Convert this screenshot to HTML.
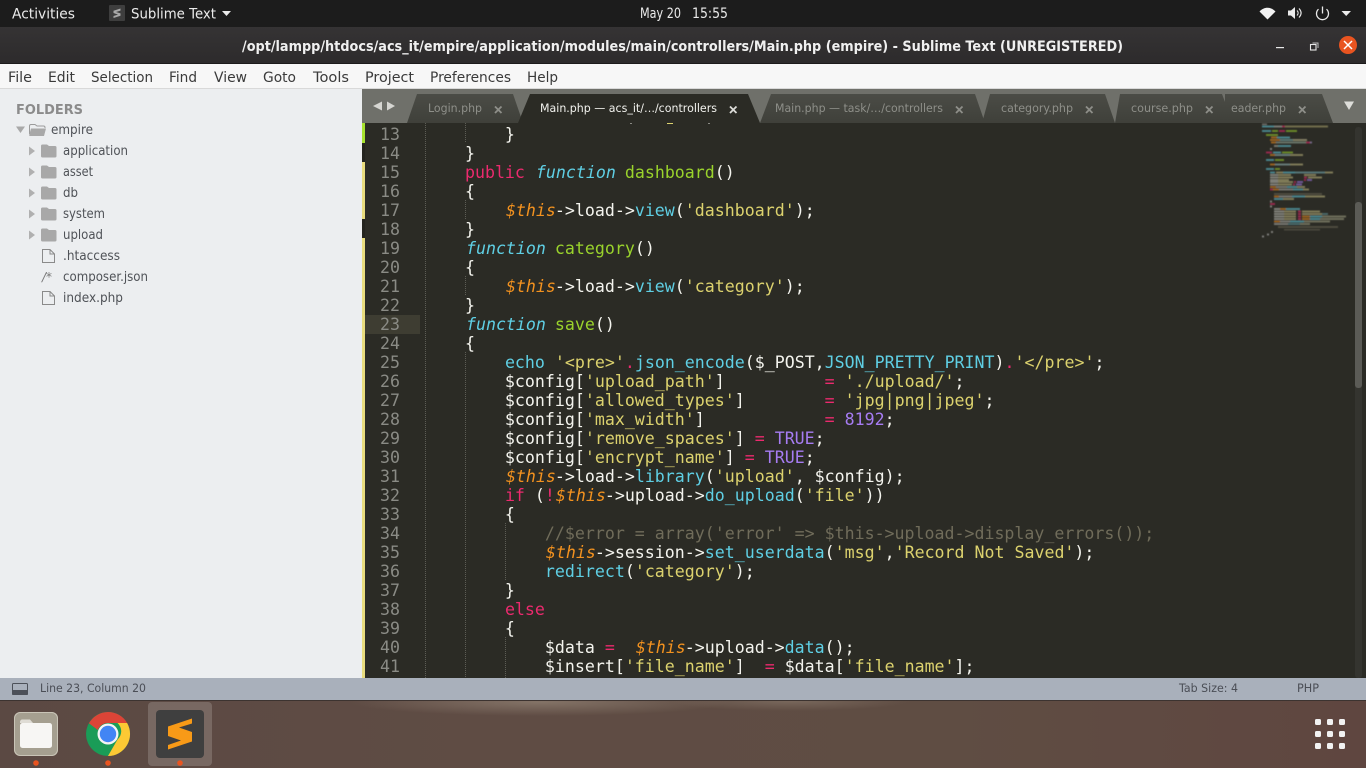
<!DOCTYPE html>
<html>
<head>
<meta charset="utf-8">
<title>Sublime Text</title>
<style>
html,body{margin:0;padding:0;width:1366px;height:768px;overflow:hidden;background:#2b2b25}
svg{position:absolute;left:0;top:0}
#code{position:absolute;left:365px;top:123px;width:990px;height:555px;overflow:hidden;background:#2b2b25}
.l{position:absolute;left:60px;height:19px;line-height:19px;white-space:pre;font-family:"DejaVu Sans Mono",monospace;font-size:16.6px;color:#f4f4ee}
.n{position:absolute;left:0;width:35px;text-align:right;height:19px;line-height:19px;font-family:"DejaVu Sans Mono",monospace;font-size:16.6px;color:#8a8b85}
.k{color:#ec2a6e}.f{color:#5fcfe4;font-style:italic;position:relative;left:1px}.c{color:#5fcfe4}.g{color:#9ad32c}.s{color:#dcd26e}.v{color:#f3921f;font-style:italic;position:relative;left:1px}.p{color:#a67cf2}.m{color:#706c5a}
.t{font-family:"DejaVu Sans",sans-serif}
</style>
</head>
<body>
<svg width="1366" height="768" viewBox="0 0 1366 768" xmlns="http://www.w3.org/2000/svg">
<defs>
<linearGradient id="tb" x1="0" y1="0" x2="0" y2="1"><stop offset="0" stop-color="#353334"/><stop offset="1" stop-color="#2d2b2c"/></linearGradient>
<linearGradient id="dock" x1="0" y1="0" x2="1" y2="0"><stop offset="0" stop-color="#5b4943"/><stop offset=".35" stop-color="#5f4c44"/><stop offset=".7" stop-color="#5f4d43"/><stop offset="1" stop-color="#5f4640"/></linearGradient>
<radialGradient id="sm1"><stop offset="0" stop-color="#a89a8a" stop-opacity=".5"/><stop offset="1" stop-color="#a89a8a" stop-opacity="0"/></radialGradient>
<linearGradient id="tabi" x1="0" y1="0" x2="0" y2="1"><stop offset="0" stop-color="#4b4c46"/><stop offset="1" stop-color="#3f403a"/></linearGradient>
<filter id="bl"><feGaussianBlur stdDeviation=".6"/></filter>
</defs>
<!-- top bar -->
<rect x="0" y="0" width="1366" height="27" fill="#1c1c1c"/>
<g class="t" fill="#ebebeb" font-size="14">
<text x="12" y="18.5" textLength="63" lengthAdjust="spacingAndGlyphs">Activities</text>
<text x="131" y="18.5" textLength="85" lengthAdjust="spacingAndGlyphs">Sublime Text</text>
<text x="640" y="18" textLength="41" lengthAdjust="spacingAndGlyphs">May 20</text>
<text x="692" y="18" textLength="36" lengthAdjust="spacingAndGlyphs">15:55</text>
</g>
<rect x="109" y="5" width="16" height="16" rx="1" fill="#3e3e3e"/>
<path d="M120.5 8.5L113.5 10.8V13L118 14.6L113.5 16V18L120.5 15.7V13.4L116 12L120.5 10.6Z" fill="#a9a9a9"/>
<path d="M222 11H231L226.5 16Z" fill="#ebebeb"/>
<path d="M1259.5 11.5C1264 6.5 1271 6.5 1275.5 11.5L1267.5 19.5Z" fill="#f2f2f2"/>
<path d="M1288 10.5H1291L1295 7V19L1291 15.5H1288Z" fill="#ebebeb"/>
<path d="M1297 10.5C1298.5 12 1298.5 14 1297 15.5M1299 8.5C1301.8 11.5 1301.8 14.5 1299 17.5" fill="none" stroke="#ebebeb" stroke-width="1.1"/>
<path d="M1318.5 9.2A6 6 0 1 0 1326.5 9.2" fill="none" stroke="#ebebeb" stroke-width="1.3"/>
<path d="M1322.5 6.5V13.5" stroke="#ebebeb" stroke-width="1.3"/>
<path d="M1341.5 11H1351L1346.2 16Z" fill="#ebebeb"/>
<!-- title bar -->
<rect x="0" y="27" width="1366" height="36" fill="url(#tb)"/>
<rect x="0" y="63" width="1366" height="1" fill="#1c1b1b"/>
<text class="t" x="242" y="51" font-size="14" font-weight="700" fill="#f0f0f0" textLength="881" lengthAdjust="spacingAndGlyphs">/opt/lampp/htdocs/acs_it/empire/application/modules/main/controllers/Main.php (empire) - Sublime Text (UNREGISTERED)</text>
<rect x="1276" y="47" width="8" height="1.2" fill="#e8e8e8"/>
<rect x="1310.5" y="44.5" width="5.5" height="5.5" fill="none" stroke="#e8e8e8" stroke-width="1.1"/>
<path d="M1312.5 43H1318V48" fill="none" stroke="#bbb" stroke-width="1"/>
<circle cx="1348" cy="45" r="9" fill="#e95420"/>
<path d="M1344 41L1352 49M1352 41L1344 49" stroke="#fff" stroke-width="1.5"/>
<!-- menu -->
<rect x="0" y="64" width="1366" height="24" fill="#f7f7f7"/>
<rect x="0" y="88" width="1366" height="1" fill="#d9d9d9"/>
<g class="t" fill="#3a3a3a" font-size="14">
<text x="8" y="82" textLength="24" lengthAdjust="spacingAndGlyphs">File</text>
<text x="48" y="82" textLength="27" lengthAdjust="spacingAndGlyphs">Edit</text>
<text x="91" y="82" textLength="62" lengthAdjust="spacingAndGlyphs">Selection</text>
<text x="169" y="82" textLength="28" lengthAdjust="spacingAndGlyphs">Find</text>
<text x="214" y="82" textLength="33" lengthAdjust="spacingAndGlyphs">View</text>
<text x="263" y="82" textLength="33" lengthAdjust="spacingAndGlyphs">Goto</text>
<text x="313" y="82" textLength="36" lengthAdjust="spacingAndGlyphs">Tools</text>
<text x="365" y="82" textLength="49" lengthAdjust="spacingAndGlyphs">Project</text>
<text x="430" y="82" textLength="81" lengthAdjust="spacingAndGlyphs">Preferences</text>
<text x="527" y="82" textLength="31" lengthAdjust="spacingAndGlyphs">Help</text>
</g>
<!-- sidebar -->
<rect x="0" y="89" width="362" height="589" fill="#eceef0"/>
<text class="t" x="16" y="114" font-size="13" font-weight="700" fill="#8b8b8b" textLength="67" lengthAdjust="spacingAndGlyphs">FOLDERS</text>
<g class="t" fill="#4f5257" font-size="13">
<text x="51" y="134" textLength="42" lengthAdjust="spacingAndGlyphs">empire</text>
<text x="63" y="155" textLength="65" lengthAdjust="spacingAndGlyphs">application</text>
<text x="63" y="176" textLength="30" lengthAdjust="spacingAndGlyphs">asset</text>
<text x="63" y="197" textLength="15" lengthAdjust="spacingAndGlyphs">db</text>
<text x="63" y="218" textLength="42" lengthAdjust="spacingAndGlyphs">system</text>
<text x="63" y="239" textLength="40" lengthAdjust="spacingAndGlyphs">upload</text>
<text x="63" y="260" textLength="57" lengthAdjust="spacingAndGlyphs">.htaccess</text>
<text x="63" y="281" textLength="85" lengthAdjust="spacingAndGlyphs">composer.json</text>
<text x="63" y="302" textLength="60" lengthAdjust="spacingAndGlyphs">index.php</text>
</g>
<path d="M16 126.500H25L20.500 133Z" fill="#a8a8a8"/>
<path d="M29.500 134V126C29.500 125 30 124.500 31 124.500H35L37 126H43.500C44.500 126 45 126.500 45 127.500V128" fill="none" stroke="#9b9b9b" stroke-width="1"/>
<path d="M29 135.500L31 128.500H46L44 136H30Z" fill="#a8a8a8"/>
<g fill="#b0b0b0">
<path d="M29 146.500L35 151L29 155.500Z"/><path d="M29 167.500L35 172L29 176.500Z"/><path d="M29 188.500L35 193L29 197.500Z"/><path d="M29 209.500L35 214L29 218.500Z"/><path d="M29 230.500L35 235L29 239.500Z"/>
</g>
<g fill="#a8a8a8">
<path d="M41 146C41 145 41.500 144.500 42.500 144.500H47L49 146H55C56 146 56.500 146.500 56.500 147.500V156C56.500 157 56 157.500 55 157.500H42.500C41.500 157.500 41 157 41 156Z"/>
<path d="M41 167C41 166 41.500 165.500 42.500 165.500H47L49 167H55C56 167 56.500 167.500 56.500 168.500V177C56.500 178 56 178.500 55 178.500H42.500C41.500 178.500 41 178 41 177Z"/>
<path d="M41 188C41 187 41.500 186.500 42.500 186.500H47L49 188H55C56 188 56.500 188.500 56.500 189.500V198C56.500 199 56 199.500 55 199.500H42.500C41.500 199.500 41 199 41 198Z"/>
<path d="M41 209C41 208 41.500 207.500 42.500 207.500H47L49 209H55C56 209 56.500 209.500 56.500 210.500V219C56.500 220 56 220.500 55 220.500H42.500C41.500 220.500 41 220 41 219Z"/>
<path d="M41 230C41 229 41.500 228.500 42.500 228.500H47L49 230H55C56 230 56.500 230.500 56.500 231.500V240C56.500 241 56 241.500 55 241.500H42.500C41.500 241.500 41 241 41 240Z"/>
</g>
<g fill="none" stroke="#8a8a8a" stroke-width="1">
<path d="M42.500 249.500H50L54.500 254V262.500H42.500Z"/><path d="M50 249.500V254H54.500"/>
<path d="M42.500 291.500H50L54.500 296V304.500H42.500Z"/><path d="M50 291.500V296H54.500"/>
</g>
<text class="t" x="42" y="281" font-size="12" fill="#777" font-style="italic">/*</text>
<!-- tab bar -->
<rect x="362" y="89" width="1004" height="34" fill="#6f706a"/>
<path d="M373 106L382 101.500V110.500Z" fill="#d6d6d2"/><path d="M387 101.500L395 106L387 110.500Z" fill="#d6d6d2"/>
<path d="M1225 123L1225 94H1322L1333 123Z" fill="url(#tabi)"/>
<path d="M1115 123L1120 94H1222L1233 123Z" fill="url(#tabi)"/>
<path d="M982 123L990 94H1105L1115 123Z" fill="url(#tabi)"/>
<path d="M760 123L771 94H975L985 123Z" fill="url(#tabi)"/>
<path d="M407 123L417 94H513L523 123Z" fill="url(#tabi)"/>
<path d="M518 123L530 94H748L760 123Z" fill="#2b2b25"/>
<g class="t" font-size="11.700" fill="#8e8f89">
<text x="428" y="112" textLength="54" lengthAdjust="spacingAndGlyphs">Login.php</text>
<text x="775" y="112" textLength="168" lengthAdjust="spacingAndGlyphs">Main.php — task/…/controllers</text>
<text x="1001" y="112" textLength="72" lengthAdjust="spacingAndGlyphs">category.php</text>
<text x="1131" y="112" textLength="62" lengthAdjust="spacingAndGlyphs">course.php</text>
<text x="1231" y="112" textLength="55" lengthAdjust="spacingAndGlyphs">eader.php</text>
</g>
<text class="t" x="540" y="112" font-size="11.700" fill="#f2f2ee" textLength="177" lengthAdjust="spacingAndGlyphs">Main.php — acs_it/…/controllers</text>
<g stroke="#8e8f89" stroke-width="1.800">
<path d="M495 106.500L501.500 113M501.500 106.500L495 113"/>
<path d="M956 106.500L962.500 113M962.500 106.500L956 113"/>
<path d="M1086 106.500L1092.500 113M1092.500 106.500L1086 113"/>
<path d="M1206 106.500L1212.500 113M1212.500 106.500L1206 113"/>
<path d="M1299 106.500L1305.500 113M1305.500 106.500L1299 113"/>
</g>
<path d="M730 106.500L736.500 113M736.500 106.500L730 113" stroke="#dcdcd8" stroke-width="1.800"/>
<path d="M1344 101.500H1354L1349 110Z" fill="#dededa"/>
<!-- dock -->
<rect x="0" y="701" width="1366" height="67" fill="url(#dock)"/>
<ellipse cx="540" cy="702" rx="190" ry="14" fill="url(#sm1)"/>
<ellipse cx="790" cy="701" rx="120" ry="10" fill="url(#sm1)" opacity=".7"/>
<!-- status -->
<rect x="0" y="678" width="1366" height="22" fill="#a9b0bb"/>
<rect x="0" y="700" width="1366" height="1" fill="#3c3330"/>
<rect x="12.500" y="683.500" width="15" height="11" rx="1" fill="none" stroke="#4c5058" stroke-width="1"/>
<rect x="12" y="690" width="16" height="5" rx="1" fill="#4c5058"/>
<g class="t" font-size="11.500" fill="#4b4e56">
<text x="40" y="692" textLength="106" lengthAdjust="spacingAndGlyphs">Line 23, Column 20</text>
<text x="1179" y="692" textLength="59" lengthAdjust="spacingAndGlyphs">Tab Size: 4</text>
<text x="1297" y="692" textLength="22" lengthAdjust="spacingAndGlyphs">PHP</text>
</g>
<rect x="14" y="712" width="44" height="44" rx="6" fill="#a59f90"/>
<rect x="14.500" y="712.500" width="43" height="43" rx="6" fill="none" stroke="#c9c4b7" stroke-width="1"/>
<path d="M20 722C20 720.500 21 719.500 22.500 719.500H30L33 723H20Z" fill="#dfdcd5"/>
<rect x="20" y="723" width="32" height="25" rx="2.500" fill="#f7f6f4"/>
<circle cx="108" cy="734" r="22" fill="#1a9c57"/>
<path d="M108 712A22 22 0 0 1 127.100 723H108A11 11 0 0 0 97.800 730L88.900 723.300A22 22 0 0 1 108 712Z" fill="#dc4437"/>
<path d="M127.100 723A22 22 0 0 1 108 756L117.500 739.500A11 11 0 0 0 117.500 723Z" fill="#fcc934"/>
<circle cx="108" cy="734" r="10.500" fill="#f4f4f4"/>
<circle cx="108" cy="734" r="8.200" fill="#4285f4"/>
<rect x="148" y="702" width="64" height="64" rx="4" fill="#ffffff" opacity=".17"/>
<rect x="156" y="710" width="48" height="48" rx="4" fill="#3f3f3f"/>
<path d="M192 718.500L168 726.500V736L181 740.500L168 745V749.500L192 741.500V732L179 727.500L192 723.500Z" fill="#f89a17"/>
<circle cx="36" cy="763" r="2.800" fill="#e95420"/><circle cx="108" cy="763" r="2.800" fill="#e95420"/><circle cx="180" cy="763" r="2.800" fill="#e95420"/>
<g fill="#f2f2f2">
<rect x="1315" y="719" width="6" height="6" rx="1.500"/><rect x="1327" y="719" width="6" height="6" rx="1.500"/><rect x="1339" y="719" width="6" height="6" rx="1.500"/>
<rect x="1315" y="731" width="6" height="6" rx="1.500"/><rect x="1327" y="731" width="6" height="6" rx="1.500"/><rect x="1339" y="731" width="6" height="6" rx="1.500"/>
<rect x="1315" y="743" width="6" height="6" rx="1.500"/><rect x="1327" y="743" width="6" height="6" rx="1.500"/><rect x="1339" y="743" width="6" height="6" rx="1.500"/>
</g>
</svg>

<div id="code">
<div style="position:absolute;left:0;top:192px;width:55px;height:19px;background:#3e3d32"></div>
<div class="n" style="top:2px">13</div><div class="n" style="top:21px">14</div><div class="n" style="top:40px">15</div><div class="n" style="top:59px">16</div><div class="n" style="top:78px">17</div><div class="n" style="top:97px">18</div><div class="n" style="top:116px">19</div><div class="n" style="top:135px">20</div><div class="n" style="top:154px">21</div><div class="n" style="top:173px">22</div><div class="n" style="top:192px">23</div><div class="n" style="top:211px">24</div><div class="n" style="top:230px">25</div><div class="n" style="top:249px">26</div><div class="n" style="top:268px">27</div><div class="n" style="top:287px">28</div><div class="n" style="top:306px">29</div><div class="n" style="top:325px">30</div><div class="n" style="top:344px">31</div><div class="n" style="top:363px">32</div><div class="n" style="top:382px">33</div><div class="n" style="top:401px">34</div><div class="n" style="top:420px">35</div><div class="n" style="top:439px">36</div><div class="n" style="top:458px">37</div><div class="n" style="top:477px">38</div><div class="n" style="top:496px">39</div><div class="n" style="top:515px">40</div><div class="n" style="top:534px">41</div>
<div class="l" style="top:2px">        }</div>
<div class="l" style="top:21px">    }</div>
<div class="l" style="top:40px">    <span class="k">public</span> <span class="f">function</span> <span class="g">dashboard</span>()</div>
<div class="l" style="top:59px">    {</div>
<div class="l" style="top:78px">        <span class="v">$this</span>-&gt;load-&gt;<span class="c">view</span>(<span class="s">'dashboard'</span>);</div>
<div class="l" style="top:97px">    }</div>
<div class="l" style="top:116px">    <span class="f">function</span> <span class="g">category</span>()</div>
<div class="l" style="top:135px">    {</div>
<div class="l" style="top:154px">        <span class="v">$this</span>-&gt;load-&gt;<span class="c">view</span>(<span class="s">'category'</span>);</div>
<div class="l" style="top:173px">    }</div>
<div class="l" style="top:192px">    <span class="f">function</span> <span class="g">save</span>()</div>
<div class="l" style="top:211px">    {</div>
<div class="l" style="top:230px">        <span class="c">echo</span> <span class="s">'&lt;pre&gt;'</span><span class="k">.</span><span class="c">json_encode</span>($_POST,<span class="c">JSON_PRETTY_PRINT</span>)<span class="k">.</span><span class="s">'&lt;/pre&gt;'</span>;</div>
<div class="l" style="top:249px">        $config[<span class="s">'upload_path'</span>]          <span class="k">=</span> <span class="s">'./upload/'</span>;</div>
<div class="l" style="top:268px">        $config[<span class="s">'allowed_types'</span>]        <span class="k">=</span> <span class="s">'jpg|png|jpeg'</span>;</div>
<div class="l" style="top:287px">        $config[<span class="s">'max_width'</span>]            <span class="k">=</span> <span class="p">8192</span>;</div>
<div class="l" style="top:306px">        $config[<span class="s">'remove_spaces'</span>] <span class="k">=</span> <span class="p">TRUE</span>;</div>
<div class="l" style="top:325px">        $config[<span class="s">'encrypt_name'</span>] <span class="k">=</span> <span class="p">TRUE</span>;</div>
<div class="l" style="top:344px">        <span class="v">$this</span>-&gt;load-&gt;<span class="c">library</span>(<span class="s">'upload'</span>, $config);</div>
<div class="l" style="top:363px">        <span class="k">if</span> (<span class="k">!</span><span class="v">$this</span>-&gt;upload-&gt;<span class="c">do_upload</span>(<span class="s">'file'</span>))</div>
<div class="l" style="top:382px">        {</div>
<div class="l m" style="top:401px">            //$error = array('error' =&gt; $this-&gt;upload-&gt;display_errors());</div>
<div class="l" style="top:420px">            <span class="v">$this</span>-&gt;session-&gt;<span class="c">set_userdata</span>(<span class="s">'msg'</span>,<span class="s">'Record Not Saved'</span>);</div>
<div class="l" style="top:439px">            <span class="c">redirect</span>(<span class="s">'category'</span>);</div>
<div class="l" style="top:458px">        }</div>
<div class="l" style="top:477px">        <span class="k">else</span></div>
<div class="l" style="top:496px">        {</div>
<div class="l" style="top:515px">            $data <span class="k">=</span>  <span class="v">$this</span>-&gt;upload-&gt;<span class="c">data</span>();</div>
<div class="l" style="top:534px">            $insert[<span class="s">'file_name'</span>]  <span class="k">=</span> $data[<span class="s">'file_name'</span>];</div>
</div>

<svg width="1366" height="768" viewBox="0 0 1366 768" xmlns="http://www.w3.org/2000/svg" style="pointer-events:none">
<!-- clipped descenders of line above -->
<rect x="630" y="123" width="2" height="1" fill="#8a8a84"/><rect x="667" y="123" width="6" height="1" fill="#dcd26e"/><rect x="708" y="123" width="2" height="1" fill="#8a8a84"/>
<!-- change markers -->
<rect x="362" y="123" width="3" height="20" fill="#a6e22e"/>
<rect x="362" y="143" width="3" height="19" fill="#24241f"/>
<rect x="362" y="162" width="3" height="57" fill="#e8dc7e"/>
<rect x="362" y="219" width="3" height="19" fill="#24241f"/>
<rect x="362" y="238" width="3" height="440" fill="#e8dc7e"/>
<!-- indent guides -->
<g stroke="#5d5d55" stroke-width="1" stroke-dasharray="1 1" fill="none">
<path d="M425.500 123V678"/>
<path d="M465.500 123V143M465.500 200V219M465.500 276V295M465.500 352V678"/>
<path d="M505.500 523V580M505.500 637V678"/>
</g>
<!-- scrollbar -->
<rect x="1355" y="127" width="7" height="551" rx="3" fill="#34342f"/>
<rect x="1355" y="202" width="7" height="186" rx="3" fill="#5b5b56"/>
<!-- minimap -->
<g filter="url(#bl)" opacity=".5" shape-rendering="crispEdges">
<rect x="1262" y="123.500" width="5" height="1.500" fill="#b0b0aa"/>
<rect x="1262" y="125.500" width="12" height="2" fill="#66d9ef"/><rect x="1274" y="125.500" width="8" height="2" fill="#c8c8c2"/><rect x="1282" y="125.500" width="3" height="2" fill="#f92672"/><rect x="1285" y="125.500" width="43" height="2" fill="#b6ae72"/>
<rect x="1262" y="130" width="9" height="2" fill="#66d9ef"/><rect x="1272" y="130" width="6" height="2" fill="#a6e22e"/><rect x="1279" y="130" width="6" height="2" fill="#f92672"/><rect x="1286" y="130" width="11" height="2" fill="#a6e22e"/>
<rect x="1266" y="134" width="12" height="2" fill="#a6e22e"/><rect x="1271" y="136.500" width="6" height="2" fill="#fd971f"/><rect x="1277" y="136.500" width="13" height="2" fill="#66d9ef"/>
<rect x="1270" y="139" width="10" height="2" fill="#fd971f"/><rect x="1280" y="139" width="13" height="2" fill="#8cc8c8"/><rect x="1293" y="139" width="14" height="2" fill="#d8d0a0"/>
<rect x="1271" y="141.500" width="5" height="2" fill="#fd971f"/><rect x="1276" y="141.500" width="30" height="2" fill="#a0b8a8"/><rect x="1306" y="141.500" width="4" height="2" fill="#f92672"/><rect x="1310" y="141.500" width="2" height="2" fill="#b0a0e0"/>
<rect x="1274" y="145" width="4" height="2" fill="#c0c0b0"/><rect x="1278" y="145" width="13" height="2" fill="#66d9ef"/>
<rect x="1270" y="148" width="2" height="2" fill="#ccc"/>
<rect x="1266" y="151.500" width="6" height="2" fill="#f92672"/><rect x="1273" y="151.500" width="8" height="2" fill="#66d9ef"/><rect x="1282" y="151.500" width="11" height="2" fill="#a6e22e"/>
<rect x="1270" y="154" width="5" height="2" fill="#fd971f"/><rect x="1275" y="154" width="15" height="2" fill="#a0c8c8"/><rect x="1290" y="154" width="13" height="2" fill="#d0c88a"/>
<rect x="1266" y="159" width="8" height="2" fill="#66d9ef"/><rect x="1275" y="159" width="9" height="2" fill="#a6e22e"/>
<rect x="1270" y="163.500" width="5" height="2" fill="#fd971f"/><rect x="1275" y="163.500" width="15" height="2" fill="#a0c8c8"/><rect x="1290" y="163.500" width="13" height="2" fill="#d0c88a"/>
<rect x="1266" y="168" width="8" height="2" fill="#66d9ef"/><rect x="1275" y="168" width="5" height="2" fill="#a6e22e"/>
<rect x="1270" y="171.500" width="5" height="2" fill="#66d9ef"/><rect x="1276" y="171.500" width="7" height="2" fill="#d0c88a"/><rect x="1283" y="171.500" width="12" height="2" fill="#66d9ef"/><rect x="1295" y="171.500" width="30" height="2" fill="#80c0c8"/><rect x="1325" y="171.500" width="8" height="2" fill="#d0c88a"/>
<rect x="1270" y="174" width="8" height="2" fill="#d0d0c8"/><rect x="1278" y="174" width="13" height="2" fill="#d0c88a"/><rect x="1304" y="174" width="12" height="2" fill="#d0c88a"/>
<rect x="1270" y="176.500" width="8" height="2" fill="#d0d0c8"/><rect x="1278" y="176.500" width="15" height="2" fill="#d0c88a"/><rect x="1304" y="176.500" width="3" height="2" fill="#f92672"/><rect x="1308" y="176.500" width="14" height="2" fill="#d0c88a"/>
<rect x="1270" y="179" width="8" height="2" fill="#d0d0c8"/><rect x="1278" y="179" width="11" height="2" fill="#d0c88a"/><rect x="1304" y="179" width="2" height="2" fill="#f92672"/><rect x="1307" y="179" width="5" height="2" fill="#ae81ff"/>
<rect x="1270" y="181" width="8" height="2" fill="#d0d0c8"/><rect x="1278" y="181" width="15" height="2" fill="#d0c88a"/><rect x="1294" y="181" width="2" height="2" fill="#f92672"/><rect x="1297" y="181" width="6" height="2" fill="#ae81ff"/>
<rect x="1270" y="183.500" width="8" height="2" fill="#d0d0c8"/><rect x="1278" y="183.500" width="14" height="2" fill="#d0c88a"/><rect x="1293" y="183.500" width="2" height="2" fill="#f92672"/><rect x="1296" y="183.500" width="6" height="2" fill="#ae81ff"/>
<rect x="1270" y="186" width="6" height="2" fill="#fd971f"/><rect x="1276" y="186" width="11" height="2" fill="#c0c0b8"/><rect x="1287" y="186" width="10" height="2" fill="#66d9ef"/><rect x="1297" y="186" width="8" height="2" fill="#d0c88a"/>
<rect x="1270" y="188.500" width="3" height="2" fill="#f92672"/><rect x="1273" y="188.500" width="6" height="2" fill="#fd971f"/><rect x="1279" y="188.500" width="14" height="2" fill="#c0c0b8"/><rect x="1293" y="188.500" width="10" height="2" fill="#66d9ef"/><rect x="1303" y="188.500" width="6" height="2" fill="#d0c88a"/>
<rect x="1274" y="193" width="48" height="2" fill="#6e6b58"/>
<rect x="1274" y="195.500" width="5" height="2" fill="#fd971f"/><rect x="1279" y="195.500" width="13" height="2" fill="#c0c0b8"/><rect x="1292" y="195.500" width="13" height="2" fill="#66d9ef"/><rect x="1305" y="195.500" width="20" height="2" fill="#d0c88a"/>
<rect x="1274" y="198" width="9" height="2" fill="#66d9ef"/><rect x="1283" y="198" width="11" height="2" fill="#d0c88a"/>
<rect x="1270" y="200.500" width="2" height="2" fill="#ccc"/><rect x="1270" y="203" width="5" height="2" fill="#f92672"/><rect x="1270" y="205.500" width="2" height="2" fill="#ccc"/>
<rect x="1274" y="208" width="6" height="2" fill="#d0d0c8"/><rect x="1280" y="208" width="6" height="2" fill="#fd971f"/><rect x="1286" y="208" width="14" height="2" fill="#66d9ef"/>
<rect x="1274" y="210.500" width="10" height="2" fill="#d0d0c8"/><rect x="1284" y="210.500" width="12" height="2" fill="#d0c88a"/><rect x="1298" y="210.500" width="3" height="2" fill="#f92672"/><rect x="1302" y="210.500" width="18" height="2" fill="#d0c88a"/>
<rect x="1274" y="213" width="10" height="2" fill="#d0d0c8"/><rect x="1284" y="213" width="12" height="2" fill="#d0c88a"/><rect x="1298" y="213" width="3" height="2" fill="#f92672"/><rect x="1302" y="213" width="20" height="2" fill="#d0c88a"/><rect x="1322" y="213" width="6" height="2" fill="#66a0a8"/>
<rect x="1274" y="215.500" width="10" height="2" fill="#d0d0c8"/><rect x="1284" y="215.500" width="12" height="2" fill="#d0c88a"/><rect x="1298" y="215.500" width="3" height="2" fill="#f92672"/><rect x="1302" y="215.500" width="8" height="2" fill="#fd971f"/><rect x="1310" y="215.500" width="12" height="2" fill="#66d9ef"/><rect x="1322" y="215.500" width="24" height="2" fill="#b0b090"/>
<rect x="1274" y="218" width="10" height="2" fill="#d0d0c8"/><rect x="1284" y="218" width="12" height="2" fill="#d0c88a"/><rect x="1298" y="218" width="3" height="2" fill="#f92672"/><rect x="1302" y="218" width="8" height="2" fill="#fd971f"/><rect x="1310" y="218" width="10" height="2" fill="#66d9ef"/><rect x="1320" y="218" width="24" height="2" fill="#b0b090"/>
<rect x="1274" y="220.500" width="6" height="2" fill="#fd971f"/><rect x="1280" y="220.500" width="10" height="2" fill="#c0c0b8"/><rect x="1290" y="220.500" width="14" height="2" fill="#66d9ef"/><rect x="1304" y="220.500" width="26" height="2" fill="#b0b090"/>
<rect x="1274" y="223" width="14" height="2" fill="#c0c0b8"/><rect x="1288" y="223" width="12" height="2" fill="#66a8b0"/><rect x="1300" y="223" width="10" height="2" fill="#b0b090"/>
<rect x="1278" y="226" width="60" height="2" fill="#6e6b58"/>
<rect x="1284" y="229" width="36" height="1.500" fill="#6e6b58"/>
<rect x="1271" y="231" width="2" height="2" fill="#ccc"/><rect x="1267" y="233.500" width="2" height="2" fill="#ccc"/><rect x="1262" y="235.500" width="2" height="2" fill="#ccc"/>
</g>
</svg>
</body>
</html>
